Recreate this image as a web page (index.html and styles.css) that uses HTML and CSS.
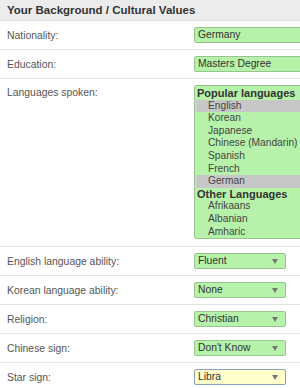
FILE: index.html
```html
<!DOCTYPE html>
<html>
<head>
<meta charset="utf-8">
<link rel="stylesheet" href="styles.css">
</head>
<body>
<div class="panel">
  <div class="header">Your Background / Cultural Values</div>
  <div class="row">
    <div class="label">Nationality:</div>
    <div class="field text green">Germany</div>
  </div>
  <div class="row">
    <div class="label">Education:</div>
    <div class="field text green">Masters Degree</div>
  </div>
  <div class="row row-top">
    <div class="label">Languages spoken:</div>
    <div class="listbox">
      <div class="group">Popular languages</div>
      <div class="opt sel">English</div>
      <div class="opt">Korean</div>
      <div class="opt">Japanese</div>
      <div class="opt">Chinese (Mandarin)</div>
      <div class="opt">Spanish</div>
      <div class="opt">French</div>
      <div class="opt sel">German</div>
      <div class="group">Other Languages</div>
      <div class="opt">Afrikaans</div>
      <div class="opt">Albanian</div>
      <div class="opt">Amharic</div>
    </div>
  </div>
  <div class="row">
    <div class="label">English language ability:</div>
    <div class="field select green"><span>Fluent</span><i class="arrow"></i></div>
  </div>
  <div class="row">
    <div class="label">Korean language ability:</div>
    <div class="field select green"><span>None</span><i class="arrow"></i></div>
  </div>
  <div class="row">
    <div class="label">Religion:</div>
    <div class="field select green"><span>Christian</span><i class="arrow"></i></div>
  </div>
  <div class="row">
    <div class="label">Chinese sign:</div>
    <div class="field select green"><span>Don't Know</span><i class="arrow"></i></div>
  </div>
  <div class="row last">
    <div class="label">Star sign:</div>
    <div class="field select yellow"><span>Libra</span><i class="arrow"></i></div>
  </div>
</div>
</body>
</html>
```
FILE: styles.css
```css
html, body {
  margin: 0;
  padding: 0;
  background: #ffffff;
  overflow: hidden;
}
body {
  font-family: "Liberation Sans", Arial, sans-serif;
  width: 300px;
}
.panel {
  width: 300px;
}
.header {
  height: 20px;
  line-height: 21px;
  background: #ececec;
  color: #333333;
  font-weight: bold;
  font-size: 11.5px;
  padding-left: 7px;
  border-bottom: 1px solid #dddddd;
  white-space: nowrap;
}
.row {
  display: grid;
  grid-template-columns: 187px 1fr;
  align-items: center;
  height: 28px;
  padding-left: 7px;
  border-bottom: 1px solid #e2e2e2;
  box-sizing: content-box;
}
.row.last {
  border-bottom: none;
}
.row-top {
  height: auto;
  align-items: start;
  padding-top: 6px;
  padding-bottom: 7px;
}
.row-top .label {
  padding-top: 2px;
}
.label {
  font-size: 10.4px;
  color: #555555;
  white-space: nowrap;
}
.field {
  box-sizing: border-box;
  height: 16px;
  border: 1px solid #98c490;
  border-radius: 2px;
  font-size: 10.3px;
  color: #333333;
  padding: 0 3px;
  line-height: 14px;
  white-space: nowrap;
}
.green {
  background: #b7f2ab;
}
.yellow {
  background: #ffffcc;
  border-color: #8aa0c0;
}
.text {
  width: 130px;
}
.select {
  width: 92px;
  display: flex;
  align-items: center;
  justify-content: space-between;
}
.arrow {
  display: block;
  width: 0;
  height: 0;
  border-left: 3.5px solid transparent;
  border-right: 3.5px solid transparent;
  border-top: 5px solid #777777;
  margin-right: 4px;
  margin-top: 1px;
}
.listbox {
  box-sizing: border-box;
  width: 130px;
  height: 154px;
  background: #b7f2ab;
  border: 1px solid #98c490;
  border-radius: 2px;
  padding-top: 1px;
  font-size: 10.2px;
  line-height: 12.6px;
  overflow: hidden;
}
.group {
  font-weight: bold;
  font-size: 11px;
  color: #333333;
  padding-left: 2px;
}
.opt {
  color: #444444;
  padding-left: 12px;
  margin-left: 1px;
}
.opt.sel {
  background: #c7c7c7;
}
```
